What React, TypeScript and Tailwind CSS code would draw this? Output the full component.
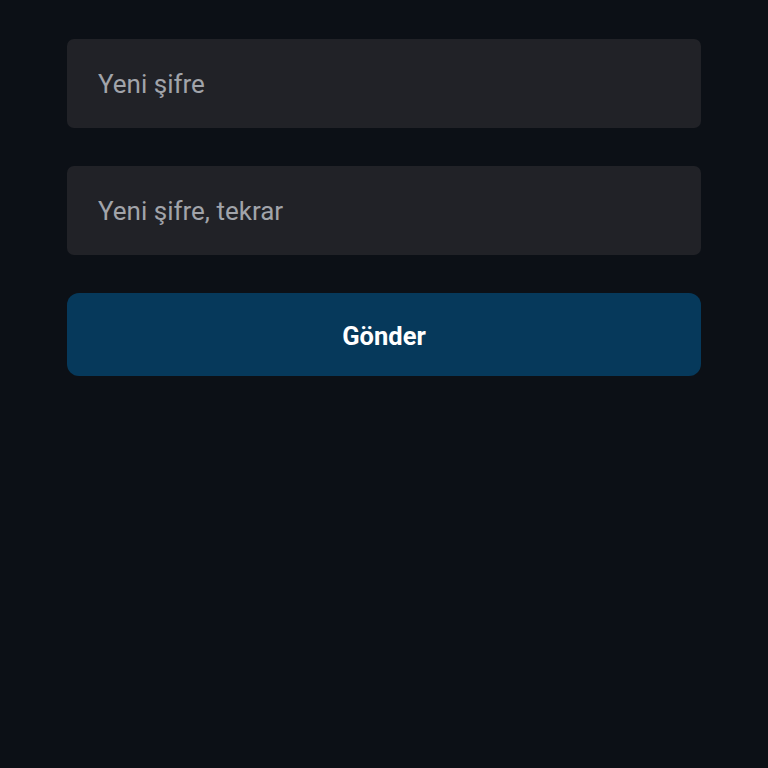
export default function App() {
  return (
    <div className="min-h-[768px] w-full bg-[#0c1016] font-['Roboto',sans-serif]">
      <form className="flex flex-col px-[67px] pt-[39px]" onSubmit={(e) => e.preventDefault()}>
        <input
          type="password"
          placeholder="Yeni şifre"
          className="h-[89px] w-full rounded-[7px] bg-[#212227] px-[31px] text-[26px] text-gray-200 outline-none placeholder:text-[#a1a4aa]"
        />
        <input
          type="password"
          placeholder="Yeni şifre, tekrar"
          className="mt-[38px] h-[89px] w-full rounded-[7px] bg-[#212227] px-[31px] text-[26px] text-gray-200 outline-none placeholder:text-[#a1a4aa]"
        />
        <button
          type="submit"
          className="mt-[38px] h-[83px] w-full rounded-[12px] bg-[#06395b] pt-[3px] text-[25.5px] font-bold text-white"
        >
          Gönder
        </button>
      </form>
    </div>
  );
}
